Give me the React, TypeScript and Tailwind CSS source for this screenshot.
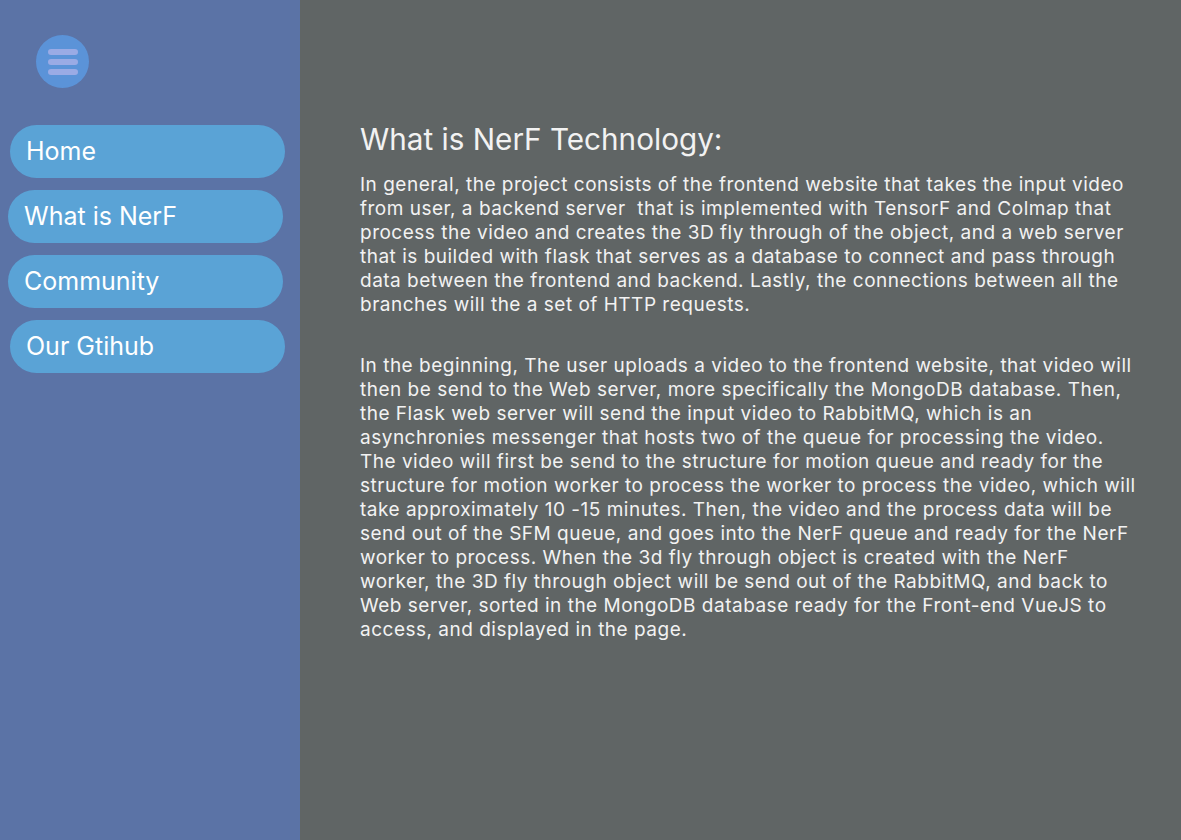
const nav = [
  { label: "Home", offset: "ml-[10px]" },
  { label: "What is NerF", offset: "ml-[8px]" },
  { label: "Community", offset: "ml-[8px]" },
  { label: "Our Gtihub", offset: "ml-[10px]" },
]

const intro = [
  "In general, the project consists of the frontend website that takes the input video",
  "from user, a backend server\u00a0 that is implemented with TensorF and Colmap that",
  "process the video and creates the 3D fly through of the object, and a web server",
  "that is builded with flask that serves as a database to connect and pass through",
  "data between the frontend and backend. Lastly, the connections between all the",
  "branches will the a set of HTTP requests.",
]

const flow = [
  "In the beginning, The user uploads a video to the frontend website, that video will",
  "then be send to the Web server, more specifically the MongoDB database. Then,",
  "the Flask web server will send the input video to RabbitMQ, which is an",
  "asynchronies messenger that hosts two of the queue for processing the video.",
  "The video will first be send to the structure for motion queue and ready for the",
  "structure for motion worker to process the worker to process the video, which will",
  "take approximately 10 -15 minutes. Then, the video and the process data will be",
  "send out of the SFM queue, and goes into the NerF queue and ready for the NerF",
  "worker to process. When the 3d fly through object is created with the NerF",
  "worker, the 3D fly through object will be send out of the RabbitMQ, and back to",
  "Web server, sorted in the MongoDB database ready for the Front-end VueJS to",
  "access, and displayed in the page.",
]

function MenuButton() {
  return (
    <button className="ml-[36px] flex h-[53px] w-[53px] flex-col items-center justify-center gap-[4px] rounded-full bg-[#5b93d8]">
      <span className="h-[6px] w-[30px] rounded-full bg-[#9aabe5]" />
      <span className="h-[6px] w-[30px] rounded-full bg-[#9aabe5]" />
      <span className="h-[6px] w-[30px] rounded-full bg-[#9aabe5]" />
    </button>
  )
}

function Lines({ lines }: { lines: string[] }) {
  return (
    <>
      {lines.map((l, i) => (
        <span key={i} className="block whitespace-pre">
          {l}
        </span>
      ))}
    </>
  )
}

export default function App() {
  return (
    <div className="flex min-h-[840px] w-full font-['Inter',sans-serif]">
      <aside className="w-[300px] shrink-0 bg-[#5b73a6] pt-[35px]">
        <MenuButton />
        <nav className="mt-[37px] flex flex-col gap-[12px]">
          {nav.map((n) => (
            <a
              key={n.label}
              href="#"
              className={`${n.offset} flex h-[53px] w-[275px] items-center rounded-full bg-[#5aa3d6] pl-[16px] text-[25px] text-white`}
            >
              {n.label}
            </a>
          ))}
        </nav>
      </aside>

      <main className="flex-1 bg-[#606565] pl-[60px] pt-[121px] text-[#f2f2f2]">
        <h1 className="text-[29.7px] leading-[36px]">What is NerF Technology:</h1>
        <div className="mt-[16px] text-[19px] leading-[24px] tracking-[0.5px]">
          <p>
            <Lines lines={intro} />
          </p>
          <p className="mt-[37px]">
            <Lines lines={flow} />
          </p>
        </div>
      </main>
    </div>
  )
}
